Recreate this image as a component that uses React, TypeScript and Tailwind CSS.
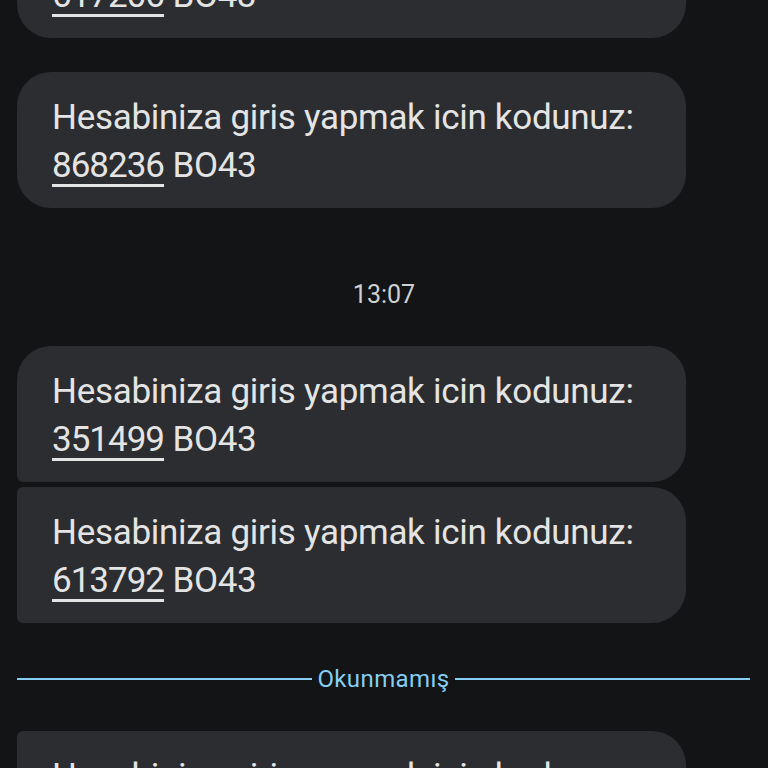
const codes = { a: "617206", b: "868236", c: "351499", d: "613792", e: "524180" };

function Bubble({ code, shape }: { code: string; shape: string }) {
  return (
    <div
      className={`w-[669px] h-[136px] bg-[#2b2d30] pl-[35px] pt-[22px] text-[35px] leading-[48px] text-[#e4e4e4] tracking-[-0.3px] ${shape}`}
    >
      <div>Hesabiniza giris yapmak icin kodunuz:</div>
      <div>
        <span className="underline decoration-[2.5px] underline-offset-[7px] tracking-[-1px]">{code}</span> BO43
      </div>
    </div>
  );
}

export default function App() {
  return (
    <div
      className="w-[768px] h-[768px] overflow-hidden bg-[#121416]"
      style={{ fontFamily: "Roboto, 'Noto Sans', sans-serif" }}
    >
      <div className="flex flex-col pl-[17px] -mt-[98px]">
        <Bubble code={codes.a} shape="rounded-[34px]" />
        <div className="mt-[34px]">
          <Bubble code={codes.b} shape="rounded-[34px]" />
        </div>
        <div className="h-[138px] pt-[71px] pr-[17px] text-center text-[25px] leading-[32px] text-[#cfd0d2]">
          13:07
        </div>
        <Bubble code={codes.c} shape="rounded-[34px] rounded-bl-[6px]" />
        <div className="mt-[5px]">
          <Bubble code={codes.d} shape="rounded-r-[34px] rounded-l-[6px]" />
        </div>
        <div className="h-[108px] pt-[4px] flex items-center gap-[5px] pr-[18px] text-[24px] tracking-[0.4px] text-[#86cdf3]">
          <div className="flex-1 h-[2px] bg-[#86cdf3]" />
          <span>Okunmamış</span>
          <div className="flex-1 h-[2px] bg-[#86cdf3]" />
        </div>
        <Bubble code={codes.e} shape="rounded-r-[34px] rounded-tl-[6px] rounded-bl-[34px]" />
      </div>
    </div>
  );
}
